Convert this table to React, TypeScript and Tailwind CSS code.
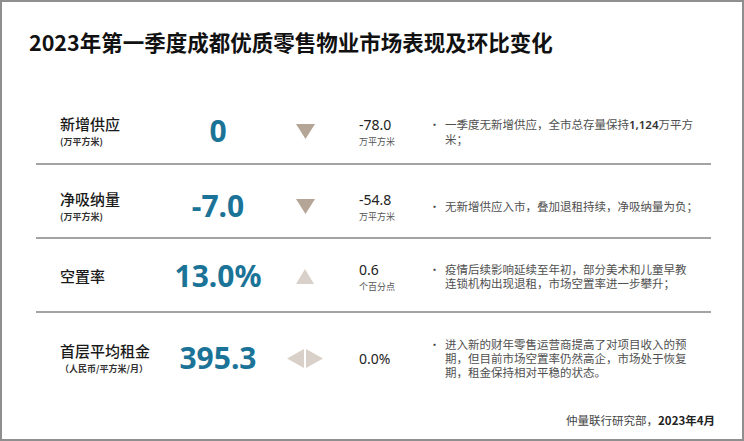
const cjk = '"Noto Sans CJK SC", "Noto Sans", sans-serif';
const num = '"Noto Sans", "Noto Sans CJK SC", sans-serif';

type Arrow = "down" | "up" | "flat";

const rows: {
  label: string;
  unit: string;
  value: string;
  arrow: Arrow;
  change: string;
  changeUnit?: string;
  lines: React.ReactNode[];
  pad: string;
  height: string;
}[] = [
  {
    label: "新增供应",
    unit: "(万平方米)",
    value: "0",
    arrow: "down",
    change: "-78.0",
    changeUnit: "万平方米",
    lines: [
      <>
        一季度无新增供应，全市总存量保持
        <span className="font-semibold text-[#333]" style={{ fontFamily: num }}>1,124</span>
        万平方
      </>,
      "米；",
    ],
    pad: "pt-[8px]",
    height: "h-[72px]",
  },
  {
    label: "净吸纳量",
    unit: "(万平方米)",
    value: "-7.0",
    arrow: "down",
    change: "-54.8",
    changeUnit: "万平方米",
    lines: ["无新增供应入市，叠加退租持续，净吸纳量为负；"],
    pad: "pt-[10px]",
    height: "h-[72px]",
  },
  {
    label: "空置率",
    unit: "",
    value: "13.0%",
    arrow: "up",
    change: "0.6",
    changeUnit: "个百分点",
    lines: ["疫情后续影响延续至年初，部分美术和儿童早教", "连锁机构出现退租，市场空置率进一步攀升；"],
    pad: "pt-[2px]",
    height: "h-[72px]",
  },
  {
    label: "首层平均租金",
    unit: "（人民币/平方米/月）",
    value: "395.3",
    arrow: "flat",
    change: "0.0%",
    lines: [
      "进入新的财年零售运营商提高了对项目收入的预",
      "期，但目前市场空置率仍然高企，市场处于恢复",
      "期，租金保持相对平稳的状态。",
    ],
    pad: "pt-0",
    height: "h-[90px]",
  },
];

function ArrowIcon({ kind }: { kind: Arrow }) {
  if (kind === "down")
    return (
      <svg width="19" height="15" viewBox="0 0 19 15">
        <polygon points="0,0 19,0 9.5,15" fill="#b5a596" />
      </svg>
    );
  if (kind === "up")
    return (
      <svg width="18" height="15" viewBox="0 0 18 15">
        <polygon points="9,0 18,15 0,15" fill="#d9d1c9" />
      </svg>
    );
  return (
    <svg width="36" height="19" viewBox="0 0 36 19">
      <polygon points="17,0 17,19 0,9.5" fill="#d9d1c9" />
      <polygon points="19,0 36,9.5 19,19" fill="#d9d1c9" />
    </svg>
  );
}

export default function App() {
  return (
    <div className="w-[744px] h-[441px] bg-white border-2 border-[#8f8f8f] flex flex-col">
      {/* Title */}
      <h1
        className="pt-[26px] pl-[27px] text-[21.5px] leading-[28px] font-bold text-[#111]"
        style={{ fontFamily: cjk }}
      >
        2023年第一季度成都优质零售物业市场表现及环比变化
      </h1>

      {/* Table */}
      <div className="mt-[35px] ml-[34px] w-[675px] flex flex-col">
        {rows.map((r, i) => (
          <div key={r.label}>
            <div className={`flex items-center ${r.height} ${r.pad}`}>
              <div className="w-[24px]" />
              <div className="w-[100px] flex flex-col" style={{ fontFamily: cjk }}>
                <span className="text-[15px] leading-[18px] font-medium text-[#1a1a1a] whitespace-nowrap">
                  {r.label}
                </span>
                {r.unit && (
                  <span className="mt-[3px] text-[9px] leading-[12px] font-bold text-[#333] whitespace-nowrap">
                    {r.unit}
                  </span>
                )}
              </div>
              <div
                className="w-[116px] text-center text-[30px] leading-[36px] font-bold text-[#1b7497]"
                style={{ fontFamily: num }}
              >
                {r.value}
              </div>
              <div className="w-[58px] flex justify-center">
                <ArrowIcon kind={r.arrow} />
              </div>
              <div className="w-[25px]" />
              <div className="w-[70px] flex flex-col">
                <span className="text-[14px] leading-[19px] text-[#222]" style={{ fontFamily: num }}>
                  {r.change}
                </span>
                {r.changeUnit && (
                  <span className="mt-[1px] text-[9px] leading-[13px] text-[#555]" style={{ fontFamily: cjk }}>
                    {r.changeUnit}
                  </span>
                )}
              </div>
              <div className="flex-1 flex items-start" style={{ fontFamily: cjk }}>
                <span className="w-[16px] text-[11px] leading-[14px] text-[#444]">•</span>
                <div className="text-[11.5px] leading-[14px] text-[#505050] whitespace-nowrap">
                  {r.lines.map((l, j) => (
                    <div key={j}>{l}</div>
                  ))}
                </div>
              </div>
            </div>
            {i < rows.length - 1 && <div className="h-[2px] bg-[#a3a3a3]" />}
          </div>
        ))}
      </div>

      {/* Source */}
      <div
        className="mt-[10px] pr-[27px] flex justify-end text-[11.5px] leading-[14px] text-[#444]"
        style={{ fontFamily: cjk }}
      >
        仲量联行研究部，
        <span className="font-semibold text-[#222]">2023年4月</span>
      </div>
    </div>
  );
}
